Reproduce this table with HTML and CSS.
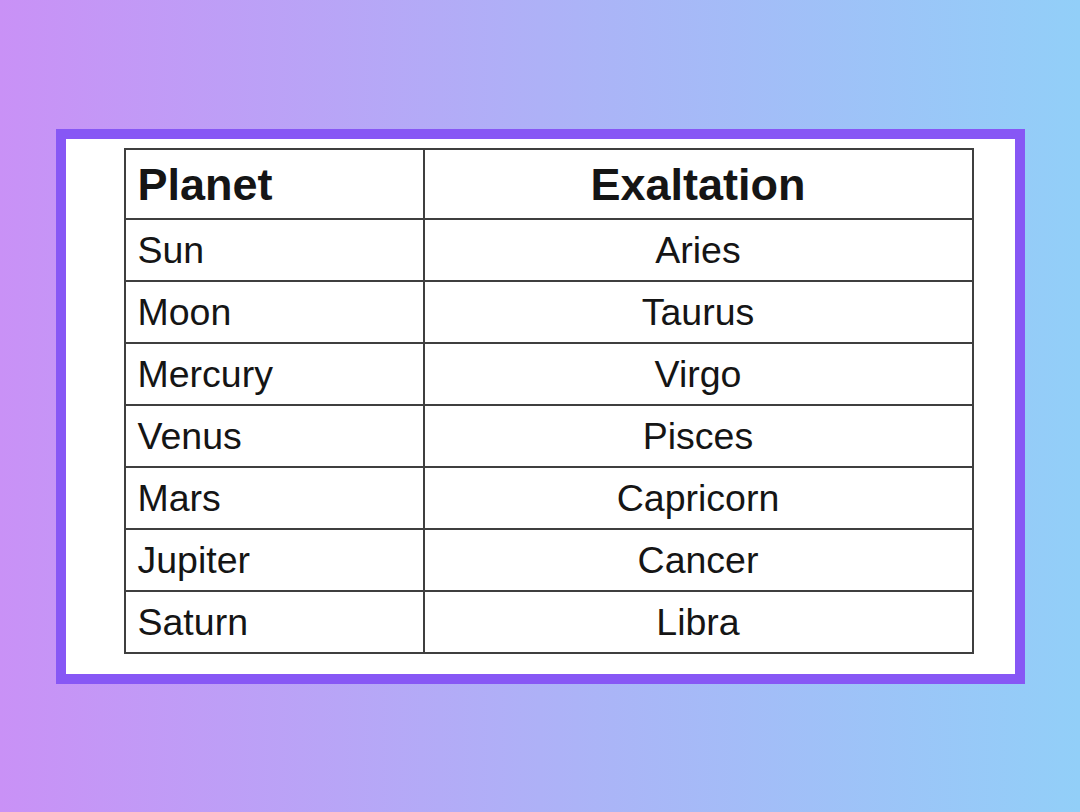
FILE: index.html
```html
<!DOCTYPE html>
<html>
<head>
<meta charset="utf-8">
<link rel="stylesheet" href="styles.css">
</head>
<body>
<div class="frame">
  <table class="exalt">
    <thead>
      <tr class="head-row"><th class="planet">Planet</th><th class="sign">Exaltation</th></tr>
    </thead>
    <tbody>
      <tr><td class="planet">Sun</td><td class="sign">Aries</td></tr>
      <tr><td class="planet">Moon</td><td class="sign">Taurus</td></tr>
      <tr><td class="planet">Mercury</td><td class="sign">Virgo</td></tr>
      <tr><td class="planet">Venus</td><td class="sign">Pisces</td></tr>
      <tr><td class="planet">Mars</td><td class="sign">Capricorn</td></tr>
      <tr><td class="planet">Jupiter</td><td class="sign">Cancer</td></tr>
      <tr><td class="planet">Saturn</td><td class="sign">Libra</td></tr>
    </tbody>
  </table>
</div>
</body>
</html>
```

FILE: styles.css
```css
html, body {
  margin: 0;
  padding: 0;
}
body {
  width: 1080px;
  height: 812px;
  display: flex;
  align-items: center;
  justify-content: center;
  background: linear-gradient(90deg, #c991f6 0%, #aeb1f7 50%, #92cff8 100%);
  font-family: "Liberation Sans", Arial, sans-serif;
}
.frame {
  box-sizing: border-box;
  width: 969px;
  height: 555px;
  border: 10px solid #8757f5;
  background: #ffffff;
  padding: 9px 40px 20px 58px;
}
.exalt {
  border-collapse: collapse;
  width: 850px;
  color: #151515;
}
.exalt th, .exalt td {
  border: 2px solid #3f3f3f;
  padding: 0 0 0 12px;
  line-height: 1;
}
.exalt th {
  font-size: 45px;
  font-weight: bold;
  height: 66px;
  padding-top: 2px;
}
.exalt td {
  font-size: 37.5px;
  height: 57px;
  padding-top: 3px;
}
.planet {
  width: 285px;
  text-align: left;
}
.exalt .sign {
  text-align: center;
  padding-left: 0;
  padding-right: 0;
}
```
